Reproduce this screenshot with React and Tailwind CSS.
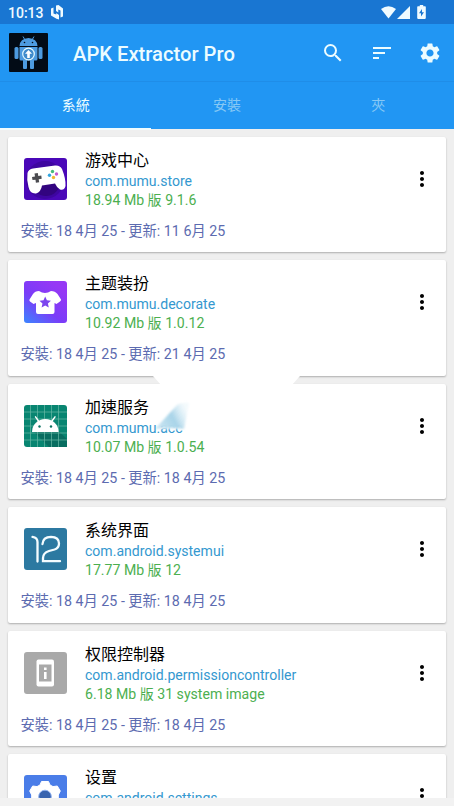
import { MdMoreVert, MdSearch, MdSettings, MdSort } from 'react-icons/md';

const StoreIcon = () => (
  <svg viewBox="0 0 43 42" className="h-[42px] w-[43px]">
    <rect width="43" height="42" rx="3" fill="#4a08b8" />
    <circle cx="21" cy="22" r="19" fill="#3e06a0" />
    <circle cx="22" cy="24" r="14" fill="#32047f" />
    <path d="M9 10.500 L31 7.500 Q36 7 38 11 Q42 21 41.500 28 Q40 33 36 31.500 Q33 30 31 25.500 L18 27.500 Q17 34 12 35.500 Q6 36 4.500 29 Q2.500 22 3.500 15 Q4.500 11 9 10.500Z" fill="#fff" />
    <path d="M10.500 15.500l3.300-.5.500 3 3-.4.400 3.200-3 .4.500 3-3.300.5-.4-3-3 .4-.5-3.200 3-.4z" fill="#4b4b50" />
    <circle cx="28.500" cy="13.500" r="1.700" fill="#45b97c" />
    <circle cx="25.500" cy="17.300" r="1.700" fill="#31a5e0" />
    <circle cx="32.500" cy="16" r="1.700" fill="#c45cd0" />
    <circle cx="29.500" cy="19.500" r="1.700" fill="#f2b632" />
  </svg>
);

const DecorateIcon = () => (
  <svg viewBox="0 0 43 42" className="h-[42px] w-[43px]">
    <defs>
      <linearGradient id="decorate" x1="0" y1="1" x2="0.75" y2="0.1">
        <stop offset="0" stopColor="#3b86ff" />
        <stop offset="0.5" stopColor="#7a3cf8" />
        <stop offset="1" stopColor="#9638f5" />
      </linearGradient>
    </defs>
    <rect width="43" height="42" rx="3" fill="url(#decorate)" />
    <path d="M15 10 Q21 14 27 10 Q31 10 33.500 13 L37 18.500 Q37.300 19.500 36 20.500 L32.500 23 L30.500 22 V31 Q30.500 33 28.500 33 H14 Q12 33 12 31 V22 L9.500 23 L6 20.500 Q5 19.500 5.500 18.500 L9 13 Q11 10 15 10Z" fill="#fff" />
    <path d="M21.200 15.500l1.700 3.700 4 .5-3 2.700.9 4-3.600-2-3.600 2 .9-4-3-2.700 4-.5z" fill="#7b45ee" />
  </svg>
);

const BoostIcon = () => (
  <svg viewBox="0 0 43 42" className="h-[42px] w-[43px]">
    <rect width="43" height="42" rx="3" fill="#088571" />
    <path d="M34 25.500 L43 34 V42 H25 L9 26Z" fill="#086d60" />
    <path d="M6.500 0v42M13.500 0v42M20.500 0v42M27.500 0v42M34.500 0v42M0 7h43M0 14h43M0 21h43M0 28h43M0 35h43" stroke="#68b9a6" strokeWidth="0.7" />
    <path d="M14.500 16 L11.500 11.800 M28 16 L31 11.800" stroke="#fff" strokeWidth="1.400" strokeLinecap="round" />
    <path d="M8 27 A13.300 13 0 0 1 34.600 27Z" fill="#fff" />
    <circle cx="15.500" cy="21.500" r="1.200" fill="#08705f" />
    <circle cx="27" cy="21.500" r="1.200" fill="#08705f" />
  </svg>
);

const SystemIcon = () => (
  <svg viewBox="0 0 43 42" className="h-[42px] w-[43px]">
    <rect width="43" height="42" rx="3" fill="#2c79a1" />
    <path d="M8.500 8.800 Q13.500 9.500 13.500 14 V33.500 M18.500 16 Q19 8.800 27 8.800 Q35 9 35 15.500 Q35 20 30.500 21.500 L25 23 Q19 25 19 30 V33.200 H36" stroke="#f4fcff" strokeWidth="2.300" fill="none" strokeLinecap="round" />
  </svg>
);

const PermissionIcon = () => (
  <svg viewBox="0 0 43 42" className="h-[42px] w-[43px]">
    <rect width="43" height="42" rx="3" fill="#a9a9a9" />
    <rect x="12.500" y="7.500" width="17.500" height="27" rx="2" fill="#fff" />
    <rect x="15" y="12.500" width="12.500" height="17" fill="#a9a9a9" />
    <path d="M20 15.500h2.600v2.500H20zM20 20h2.600v7H20z" fill="#fff" />
  </svg>
);

const SettingsIcon = () => (
  <svg viewBox="0 0 43 42" className="h-[42px] w-[43px]">
    <rect width="43" height="42" rx="3" fill="#4a7de8" />
    <path d="M17.500 6.500h7l1.500 3.500 3 1.600 4.300-.6 3 5-2 4v3l2 4-3 5-4.300-.6-3 1.600L24.500 37h-7L16 33l-3-1.600-4.300.6-3-5 2-4v-3l-2-4 3-5 4.300.6 3-1.600z" fill="#fff" strokeLinejoin="round" strokeWidth="1" stroke="#fff" />
    <circle cx="21" cy="21.500" r="6.300" fill="#3863ae" stroke="#8fb0ef" strokeWidth="1" />
  </svg>
);

const apps = [
  { name: '游戏中心', pkg: 'com.mumu.store', info: '18.94 Mb 版 9.1.6', updated: '11 6月 25', Icon: StoreIcon },
  { name: '主题装扮', pkg: 'com.mumu.decorate', info: '10.92 Mb 版 1.0.12', updated: '21 4月 25', Icon: DecorateIcon },
  { name: '加速服务', pkg: 'com.mumu.acc', info: '10.07 Mb 版 1.0.54', updated: '18 4月 25', Icon: BoostIcon },
  { name: '系统界面', pkg: 'com.android.systemui', info: '17.77 Mb 版 12', updated: '18 4月 25', Icon: SystemIcon },
  { name: '权限控制器', pkg: 'com.android.permissioncontroller', info: '6.18 Mb 版 31 system image', updated: '18 4月 25', Icon: PermissionIcon },
  { name: '设置', pkg: 'com.android.settings', Icon: SettingsIcon },
];

const StatusBar = () => (
  <div className="flex h-6 items-center bg-[#1976d2] pl-2 pr-[28px] text-[#f0fbff]">
    <span className="w-[43px] pt-[2px] text-[14px] font-medium leading-5">10:13</span>
    <svg viewBox="0 0 13 15" className="h-[15px] w-[13px]" fill="currentColor">
      <path d="M0 3.500L2.500 2.500V8.500L5.300 9.500V8L8 10V14.500L5.500 13.800L0 10.500Z M5 0.500L7.500 0L12 3.500V11.500L9.500 12.500V5.500L7.300 4.500V7.500L5 6Z" />
    </svg>
    <div className="ml-auto flex items-center">
      <svg viewBox="0 0 15 13" className="h-[13px] w-[15px]" fill="currentColor">
        <path d="M0 3 Q7.500 -2.500 15 3 L7.500 12.500Z" />
      </svg>
      <svg viewBox="0 0 13 13" className="ml-[1.500px] h-[13px] w-[13px]" fill="currentColor">
        <path d="M13 0V13H0Z" />
      </svg>
      <svg viewBox="0 0 9 14" className="ml-[7px] h-[14px] w-[9px]">
        <path d="M2.800 0h3.400v1.300H8q.8 0 .8.800v11q0 .8-.8.800H1q-.8 0-.8-.8v-11q0-.8.800-.8h1.800z" fill="#f0fbff" />
        <path d="M5 4 L2 8.300h2V11.500L7 7.200H5z" fill="#1976d2" />
      </svg>
    </div>
  </div>
);

const Logo = () => (
  <svg viewBox="0 0 39 39" className="h-[39px] w-[39px]">
    <rect width="39" height="39" rx="1" fill="#020b16" />
    <g fill="#4d9be0">
      <path d="M10.500 13 Q11 5.500 19.500 5 Q28 5.500 28.500 13Z" />
      <path d="M14 3.500l2 3.500M25 3.500l-2 3.500" stroke="#4d9be0" />
      <path d="M10.500 14h18v12q0 1.500-1.500 1.500H12q-1.500 0-1.500-1.500z" />
      <rect x="5.500" y="14" width="4" height="12" rx="1.500" />
      <rect x="29.500" y="14" width="4" height="12" rx="1.500" />
      <rect x="14" y="26" width="4" height="10" rx="1" />
      <rect x="21" y="26" width="4" height="10" rx="1" />
    </g>
    <circle cx="15.500" cy="9.500" r="0.800" fill="#020b16" />
    <circle cx="23.500" cy="9.500" r="0.800" fill="#020b16" />
    <circle cx="19.500" cy="21" r="5.800" fill="#3f8bcc" stroke="#e4faff" strokeWidth="1.200" />
    <path d="M19.500 17l3.500 3.700h-2.200v4.300h-2.600v-4.300H16z" fill="#fff" />
  </svg>
);

const Toolbar = () => (
  <div className="flex h-[57px] items-center bg-[#2196f3] pl-[9px] pr-3 text-[#ecfcff]">
    <Logo />
    <h1 className="ml-[25px] pt-[2px] text-[20.2px] font-medium leading-7">APK Extractor Pro</h1>
    <div className="ml-auto flex items-center gap-[24.5px]">
      <MdSearch className="size-6" />
      <MdSort className="size-6" />
      <MdSettings className="size-6" />
    </div>
  </div>
);

const Tabs = () => (
  <div className="grid h-12 grid-cols-3 border-t border-[#1f8de8] bg-[#2196f3] text-center text-[14px] leading-[46px] text-[#86c8f5]">
    <div className="border-b-2 border-[#f0fcff] text-[#ecfcff]">系統</div>
    <div>安裝</div>
    <div>夾</div>
  </div>
);

const AppCard = ({ name, pkg, info, updated, Icon }) => (
  <div className="h-[115.4px] shrink-0 rounded-[2px] bg-white pt-[13px] shadow-[0_1px_2px_rgba(0,0,0,0.28)]">
    <div className="flex pl-4">
      <div className="pt-2">
        <Icon />
      </div>
      <div className="ml-[18px] whitespace-nowrap">
        <div className="h-[21px] text-[16px] leading-[21px] text-black">{name}</div>
        <div className="h-[19px] text-[14.05px] leading-[20px] text-[#3498cf]">{pkg}</div>
        {info && <div className="h-[19px] text-[14.1px] leading-[20px] text-[#4caf50]">{info}</div>}
      </div>
      <MdMoreVert className="ml-auto mr-[12px] mt-[17px] size-6 text-black" />
    </div>
    {updated && (
      <div className="mt-[12px] pl-[12.5px] text-[14.25px] leading-5 text-[#5c6bb0]">
        安裝: 18 4月 25 - 更新: {updated}
      </div>
    )}
  </div>
);

// pale smear lying over the second and third card
const Smear = () => (
  <svg viewBox="0 0 150 62" className="absolute left-[152px] top-[375px] h-[62px] w-[150px]">
    <defs>
      <linearGradient id="smear" x1="0.1" y1="0.8" x2="1" y2="0.45">
        <stop offset="0" stopColor="#a5d3e8" stopOpacity="0.7" />
        <stop offset="0.5" stopColor="#9fcfe6" />
        <stop offset="1" stopColor="#e6f4fa" stopOpacity="0.5" />
      </linearGradient>
      <filter id="soft">
        <feGaussianBlur stdDeviation="0.9" />
      </filter>
    </defs>
    <path d="M1 1H148L139 11H10Z" fill="#fff" />
    <path d="M8 48L26 29H60V54H10Z" fill="#fff" filter="url(#soft)" opacity="0.9" />
    <path d="M3 54L25 30Q29 27 37 28L32 54Q19 52 3 54Z" fill="url(#smear)" filter="url(#soft)" opacity="0.9" />
  </svg>
);

const App = () => {
  return (
    <div className="relative flex h-[806px] w-[454px] flex-col overflow-hidden bg-[#efefef] font-[Roboto,'Noto_Sans_CJK_TC',sans-serif]">
      <StatusBar />
      <Toolbar />
      <Tabs />
      <div className="flex h-[669px] flex-col gap-2 overflow-hidden px-2 pt-2">
        {apps.map((app) => (
          <AppCard key={app.pkg} {...app} />
        ))}
      </div>
      <div className="h-2 bg-[#f2f2f2]" />
      <Smear />
    </div>
  );
};

export default App;
